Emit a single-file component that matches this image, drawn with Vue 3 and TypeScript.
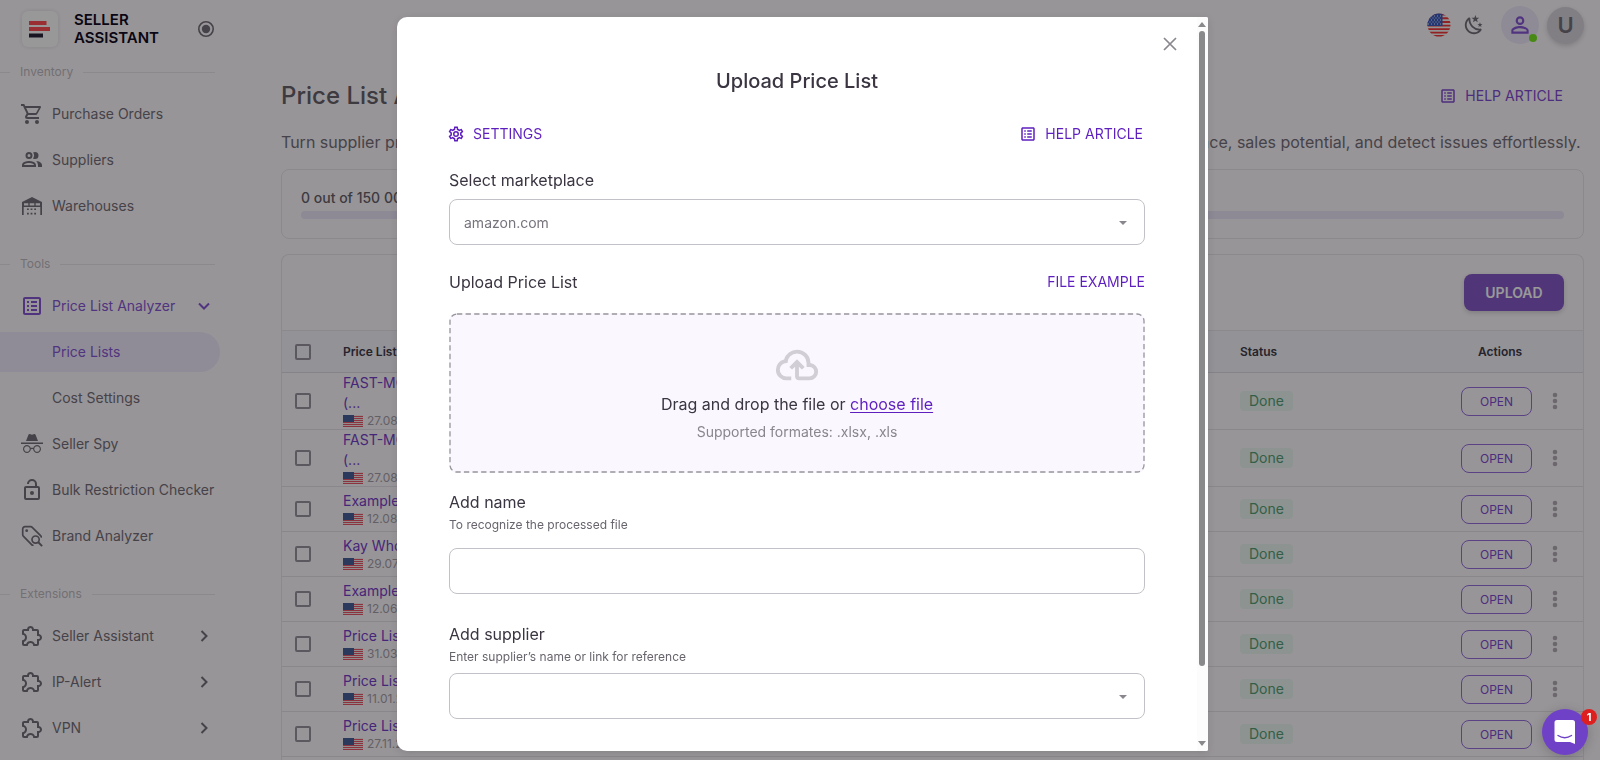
<script setup lang="ts">
import { ref } from 'vue'

interface NavItem {
  label: string
  icon?: string
  tone?: 'primary' | 'active'
  caret?: 'down' | 'right'
}

interface NavSection {
  title: string
  items: NavItem[]
}

interface PriceList {
  id: number
  name: string
  suffix?: string
  date: string
}

const icons: Record<string, string> = {
  cart: 'M17 18a2 2 0 0 1 2 2a2 2 0 0 1-2 2a2 2 0 0 1-2-2c0-1.11.89-2 2-2M1 2h3.27l.94 2H20a1 1 0 0 1 1 1c0 .17-.05.34-.12.5l-3.58 6.47c-.34.61-1 1.03-1.75 1.03H8.1l-.9 1.63l-.03.12a.25.25 0 0 0 .25.25H19v2H7a2 2 0 0 1-2-2c0-.35.09-.68.24-.96l1.36-2.45L3 4H1V2m6 16a2 2 0 0 1 2 2a2 2 0 0 1-2 2a2 2 0 0 1-2-2c0-1.11.89-2 2-2m9-7l2.78-5H6.14l2.36 5H16z',
  people: 'M13.07 10.41a5 5 0 0 0 0-5.82A3.39 3.39 0 0 1 15 4a3.5 3.5 0 0 1 0 7a3.39 3.39 0 0 1-1.93-.59M5.5 7.5A3.5 3.5 0 1 1 9 11a3.5 3.5 0 0 1-3.5-3.5m2 0A1.5 1.5 0 1 0 9 6a1.5 1.5 0 0 0-1.5 1.5M16 17v2H2v-2s0-4 7-4s7 4 7 4m-2 0c-.14-.78-1.33-2-5-2s-4.93 1.31-5 2m11.95-4A5.32 5.32 0 0 1 18 17v2h4v-2s0-3.63-6.06-4Z',
  warehouse: 'M2 21V8l10-5l10 5v13h-1.700V13H3.700v8zM4 9.200v2.300h4.300V9.200zm5.700 0v2.300h4.600V9.200zm6 0v2.300H20V9.200zM7 14.500h1.800v1.600H7zm3.600 0h1.800v1.600h-1.800zm3.600 0H16v1.600h-1.800zM7 18.800h1.800v1.600H7zm3.600 0h1.800v1.600h-1.800zm3.600 0H16v1.600h-1.800z',
  list: 'M11 15h6v2h-6v-2M9 7H7v2h2V7m2 6h6v-2h-6v2m0-4h6V7h-6v2m-2 2H7v2h2v-2m12-6v14c0 1.1-.9 2-2 2H5c-1.1 0-2-.9-2-2V5c0-1.1.9-2 2-2h14c1.1 0 2 .9 2 2m-2 0H5v14h14V5M9 15H7v2h2v-2z',
  spy: 'M17.06 13C15.2 13 13.64 14.33 13.24 16.1C12.29 15.69 11.42 15.8 10.76 16.09C10.35 14.31 8.79 13 6.94 13C4.77 13 3 14.79 3 17C3 19.21 4.77 21 6.94 21C9 21 10.68 19.38 10.84 17.32C11.18 17.08 12.07 16.63 13.16 17.34C13.34 19.39 15 21 17.06 21C19.23 21 21 19.21 21 17C21 14.79 19.23 13 17.06 13M6.94 19.86C5.38 19.86 4.13 18.58 4.13 17S5.39 14.14 6.94 14.14C8.5 14.14 9.75 15.42 9.75 17S8.5 19.86 6.94 19.86M17.06 19.86C15.5 19.86 14.25 18.58 14.25 17S15.5 14.14 17.06 14.14C18.62 14.14 19.88 15.42 19.88 17S18.61 19.86 17.06 19.86M23 10.5H1V12H23V10.5M15.53 2.63C15.31 2.14 14.75 1.88 14.22 2.05L12 2.79L9.77 2.05L9.72 2.04C9.19 1.89 8.63 2.17 8.43 2.68L6 9H18L15.56 2.68L15.53 2.63Z',
  lock: 'M18 20V10H6v10h12m0-12a2 2 0 0 1 2 2v10a2 2 0 0 1-2 2H6a2 2 0 0 1-2-2V10c0-1.11.89-2 2-2h9V6a3 3 0 0 0-3-3 3 3 0 0 0-3 3H7a5 5 0 0 1 5-5 5 5 0 0 1 5 5v2h1m-6 9a2 2 0 0 1-2-2c0-1.11.89-2 2-2a2 2 0 0 1 2 2 2 2 0 0 1-2 2z',
  puzzle: 'M22 13.5c0 1.76-1.3 3.22-3 3.46V20a2 2 0 0 1-2 2h-3.8v-.3a2.7 2.7 0 0 0-2.7-2.7c-1.5 0-2.7 1.21-2.7 2.7v.3H4a2 2 0 0 1-2-2v-3.8h.3C3.79 16.2 5 15 5 13.5a2.7 2.7 0 0 0-2.7-2.7H2V7a2 2 0 0 1 2-2h3.04C7.28 3.3 8.74 2 10.5 2s3.22 1.3 3.46 3H17a2 2 0 0 1 2 2v3.04c1.7.24 3 1.7 3 3.46M17 15h1.5a1.5 1.5 0 0 0 1.5-1.5 1.5 1.5 0 0 0-1.5-1.5H17V7h-5V5.5A1.5 1.5 0 0 0 10.5 4 1.5 1.5 0 0 0 9 5.5V7H4v2.12c1.76.68 3 2.38 3 4.38s-1.25 3.7-3 4.38V20h2.12a4.7 4.7 0 0 1 4.38-3c2 0 3.7 1.25 4.38 3H17v-5z',
  moon: 'm17.75 4.09l-2.53 1.94l.91 3.06l-2.63-1.81l-2.63 1.81l.91-3.06l-2.53-1.94L12.44 4l1.06-3l1.06 3l3.19.09m3.5 6.91l-1.64 1.25l.59 1.98l-1.7-1.17l-1.7 1.17l.59-1.98L15.75 11l2.06-.05L18.5 9l.69 1.95l2.06.05m-2.28 4.95c.83-.08 1.72 1.1 1.19 1.85c-.32.45-.66.87-1.08 1.27C15.17 23 8.84 23 4.94 19.07c-3.91-3.9-3.91-10.24 0-14.14c.4-.4.82-.76 1.27-1.08c.75-.53 1.93.36 1.85 1.19c-.27 2.86.69 5.83 2.89 8.02a9.96 9.96 0 0 0 8.02 2.89m-1.64 2.02a12.08 12.08 0 0 1-7.8-3.47c-2.17-2.19-3.33-5-3.49-7.82c-2.81 3.14-2.7 7.96.31 10.98c3.02 3.01 7.84 3.12 10.98.31Z',
  user: 'M12 4a4 4 0 0 1 4 4 4 4 0 0 1-4 4 4 4 0 0 1-4-4 4 4 0 0 1 4-4m0 2a2 2 0 0 0-2 2 2 2 0 0 0 2 2 2 2 0 0 0 2-2 2 2 0 0 0-2-2m0 7c2.67 0 8 1.33 8 4v3H4v-3c0-2.67 5.33-4 8-4m0 1.9c-2.97 0-6.1 1.46-6.1 2.1v1.1h12.2V17c0-.64-3.13-2.1-6.1-2.1z',
  cog: 'M12 8a4 4 0 0 1 4 4 4 4 0 0 1-4 4 4 4 0 0 1-4-4 4 4 0 0 1 4-4m0 2a2 2 0 0 0-2 2 2 2 0 0 0 2 2 2 2 0 0 0 2-2 2 2 0 0 0-2-2m-2 12c-.25 0-.46-.18-.5-.42l-.37-2.65c-.63-.25-1.17-.59-1.69-.99l-2.49 1.01c-.22.08-.49 0-.61-.22l-2-3.46a.493.493 0 0 1 .12-.64l2.11-1.66L4.5 12l.07-1-2.11-1.63a.493.493 0 0 1-.12-.64l2-3.46c.12-.22.39-.31.61-.22l2.49 1c.52-.39 1.06-.73 1.69-.98l.37-2.65c.04-.24.25-.42.5-.42h4c.25 0 .46.18.5.42l.37 2.65c.63.25 1.17.59 1.69.98l2.49-1c.22-.09.49 0 .61.22l2 3.46c.13.22.07.49-.12.64L19.43 11l.07 1-.07 1 2.11 1.63c.19.15.25.42.12.64l-2 3.46c-.12.22-.39.31-.61.22l-2.49-1c-.52.39-1.06.73-1.69.98l-.37 2.65c-.04.24-.25.42-.5.42h-4m1.25-18-.37 2.61c-1.2.25-2.26.89-3.03 1.78L5.44 7.35l-.75 1.3L6.8 10.2a5.55 5.55 0 0 0 0 3.6l-2.12 1.56.75 1.3 2.43-1.04c.77.88 1.82 1.52 3.01 1.76l.37 2.62h1.52l.37-2.61c1.19-.25 2.24-.89 3.01-1.77l2.43 1.04.75-1.3-2.12-1.55c.4-1.17.4-2.44 0-3.61l2.11-1.55-.75-1.3-2.41 1.04a5.42 5.42 0 0 0-3.03-1.77L12.75 4h-1.5z',
  cloud: 'M6.5 20q-2.275 0-3.887-1.575T1 14.575q0-1.95 1.175-3.475T5.25 9.15q.625-2.3 2.5-3.725T12 4q2.925 0 4.963 2.038T19 11q1.725.2 2.863 1.488T23 15.5q0 1.875-1.312 3.188T18.5 20H13q-.825 0-1.412-.587T11 18v-5.15L9.4 14.4L8 13l4-4l4 4l-1.4 1.4l-1.6-1.55V18h5.5q1.05 0 1.775-.725T21 15.5t-.725-1.775T18.5 13H17v-2q0-2.075-1.463-3.538T12 6T8.463 7.463T7 11h-.5q-1.45 0-2.475 1.025T3 14.5t1.025 2.475T6.5 18H9v2z',
}

const sections: NavSection[] = [
  {
    title: 'Inventory',
    items: [
      { label: 'Purchase Orders', icon: 'cart' },
      { label: 'Suppliers', icon: 'people' },
      { label: 'Warehouses', icon: 'warehouse' },
    ],
  },
  {
    title: 'Tools',
    items: [
      { label: 'Price List Analyzer', icon: 'list', tone: 'primary', caret: 'down' },
      { label: 'Price Lists', tone: 'active' },
      { label: 'Cost Settings' },
      { label: 'Seller Spy', icon: 'spy' },
      { label: 'Bulk Restriction Checker', icon: 'lock' },
      { label: 'Brand Analyzer', icon: 'tag' },
    ],
  },
  {
    title: 'Extensions',
    items: [
      { label: 'Seller Assistant', icon: 'puzzle', caret: 'right' },
      { label: 'IP-Alert', icon: 'puzzle', caret: 'right' },
      { label: 'VPN', icon: 'puzzle', caret: 'right' },
    ],
  },
]

const priceLists: PriceList[] = [
  { id: 1, name: 'FAST-MOVING', suffix: '(...', date: '27.08.2025' },
  { id: 2, name: 'FAST-MOVING', suffix: '(...', date: '27.08.2025' },
  { id: 3, name: 'Example', date: '12.08.2025' },
  { id: 4, name: 'Kay Wholesale', date: '29.07.2025' },
  { id: 5, name: 'Example', date: '12.06.2025' },
  { id: 6, name: 'Price List', date: '31.03.2025' },
  { id: 7, name: 'Price List', date: '11.01.2025' },
  { id: 8, name: 'Price List', date: '27.11.2024' },
]

const selected = ref<number[]>([])
const marketplace = ref('amazon.com')
const listName = ref('')
const supplier = ref('')
</script>

<template>
  <div class="shell">
    <aside class="sidebar">
      <div class="brand">
        <span class="brand-mark">
          <svg width="22" height="18" viewBox="0 0 22 18" aria-hidden="true">
            <path d="M0 1h17.500v4H0zM0 7h21v4H0z" fill="#ff4f55" />
            <path d="M0 13.500h14v4H0z" fill="#2a2238" />
          </svg>
        </span>
        <strong class="brand-name">SELLER<br />ASSISTANT</strong>
        <button class="icon-button" type="button" aria-label="Pin menu">
          <svg width="18" height="18" viewBox="0 0 18 18" aria-hidden="true">
            <circle cx="9" cy="9" r="7.200" fill="none" stroke="currentColor" stroke-width="1.600" />
            <circle cx="9" cy="9" r="4.200" fill="currentColor" />
          </svg>
        </button>
      </div>
      <nav>
        <section v-for="section in sections" :key="section.title" class="nav-section">
          <h2 class="nav-title"><span>{{ section.title }}</span></h2>
          <ul class="nav-list">
            <li v-for="item in section.items" :key="item.label">
              <a href="#" class="nav-link" :class="item.tone">
                <span class="nav-icon">
                  <svg v-if="item.icon === 'tag'" width="24" height="24" viewBox="0 0 24 24" fill="none" stroke="currentColor" stroke-width="1.700" aria-hidden="true">
                    <path d="M13.500 21.200a2 2 0 0 1-1.900-.600L3.300 12.200a2 2 0 0 1-.600-1.400V5a2.300 2.300 0 0 1 2.300-2.300h5.800a2 2 0 0 1 1.400.600l8.400 8.300q.900.900.500 2" />
                    <circle cx="6.700" cy="6.700" r="1.400" fill="currentColor" stroke="none" />
                    <circle cx="15.600" cy="15.600" r="3.600" />
                    <path d="m18.300 18.300 3.800 3.800" stroke-width="2" />
                  </svg>
                  <svg v-else-if="item.icon" width="24" height="24" viewBox="0 0 24 24" fill="currentColor" fill-rule="evenodd" aria-hidden="true">
                    <path :d="icons[item.icon]" />
                  </svg>
                </span>
                <span class="nav-label">{{ item.label }}</span>
                <svg v-if="item.caret" class="nav-caret" width="16" height="16" viewBox="0 0 16 16" fill="none" stroke="currentColor" stroke-width="2" aria-hidden="true">
                  <path :d="item.caret === 'down' ? 'M3 5.500l5 5 5-5' : 'M5.500 3l5 5-5 5'" />
                </svg>
              </a>
            </li>
          </ul>
        </section>
      </nav>
    </aside>

    <main class="main">
      <header class="topbar">
        <button class="icon-button" type="button" aria-label="Language">
          <svg width="24" height="24" viewBox="0 0 24 24" aria-hidden="true">
            <defs><clipPath id="round-flag"><circle cx="12" cy="12" r="11.500" /></clipPath></defs>
            <g clip-path="url(#round-flag)">
              <path fill="#f5f5f5" d="M0 0h24v24H0z" />
              <path fill="#f5383d" d="M0 .500h24v2H0zM0 4.300h24v1.900H0zM0 8h24v1.900H0zM0 11.700h24v1.900H0zM0 15.200h24v1.900H0zM0 18.700h24v1.800H0zM0 22h24v2H0z" />
              <path fill="#3e5cc0" d="M0 0h15.500v13H0z" />
              <path stroke="#e8eaf5" stroke-width="1" stroke-dasharray="1 2" d="M1 3h14M2.500 5h12M1 7h14M2.500 9h12M1 11h14" />
            </g>
          </svg>
        </button>
        <button class="icon-button" type="button" aria-label="Dark mode">
          <svg width="22" height="22" viewBox="0 0 24 24" fill="currentColor" aria-hidden="true"><path :d="icons.moon" /></svg>
        </button>
        <button class="round account" type="button" aria-label="Account">
          <svg width="26" height="26" viewBox="0 0 24 24" fill="currentColor" aria-hidden="true"><path :d="icons.user" /></svg>
          <span class="online"></span>
        </button>
        <button class="round avatar" type="button" aria-label="Profile">U</button>
      </header>

      <div class="heading">
        <h1>Price List Analyzer</h1>
        <a href="#" class="text-link">
          <svg width="18" height="18" viewBox="0 0 24 24" fill="currentColor" aria-hidden="true"><path :d="icons.list" /></svg>
          HELP ARTICLE
        </a>
      </div>
      <p class="intro">Turn supplier price lists into profitable deals. Upload your file to match products, estimate fees and profit, check performance, sales potential, and detect issues effortlessly.</p>

      <section class="card usage">
        <p>0 out of 150 000 rows used</p>
        <div class="meter"></div>
      </section>

      <section class="card lists">
        <div class="toolbar">
          <button class="primary-button" type="button">UPLOAD</button>
        </div>
        <table class="table">
          <colgroup>
            <col class="col-check" />
            <col class="col-name" />
            <col />
            <col class="col-status" />
            <col class="col-actions" />
          </colgroup>
          <thead>
            <tr>
              <th><input type="checkbox" class="check" aria-label="Select all" /></th>
              <th>Price List</th>
              <th>Supplier</th>
              <th>Status</th>
              <th class="actions-head">Actions</th>
            </tr>
          </thead>
          <tbody>
            <tr v-for="list in priceLists" :key="list.id">
              <td><input v-model="selected" type="checkbox" class="check" :value="list.id" :aria-label="`Select ${list.name}`" /></td>
              <td>
                <a href="#" class="list-name">{{ list.name }}<template v-if="list.suffix"><br />{{ list.suffix }}</template></a>
                <div class="list-meta">
                  <svg width="20" height="12" viewBox="0 0 20 12" aria-hidden="true">
                    <path fill="#f6e6e8" d="M0 0h20v12H0z" />
                    <path fill="#e8586a" d="M0 1h20v1H0zM0 3h20v1H0zM0 5h20v1H0zM0 7h20v1H0zM0 9h20v1H0zM0 11h20v1H0z" />
                    <path fill="#48609c" d="M0 0h11v7H0z" />
                  </svg>
                  <span>{{ list.date }}</span>
                  <svg width="14" height="14" viewBox="0 0 14 14" aria-hidden="true"><circle cx="7" cy="7" r="6" fill="none" stroke="#855ac8" stroke-width="2" /></svg>
                </div>
              </td>
              <td></td>
              <td><span class="badge">Done</span></td>
              <td>
                <div class="actions">
                  <button class="open-button" type="button">OPEN</button>
                  <button class="more" type="button" aria-label="More actions">
                    <svg width="6" height="18" viewBox="0 0 6 18" fill="currentColor" aria-hidden="true">
                      <circle cx="3" cy="3" r="2.300" /><circle cx="3" cy="9" r="2.300" /><circle cx="3" cy="15" r="2.300" />
                    </svg>
                  </button>
                </div>
              </td>
            </tr>
          </tbody>
        </table>
      </section>
    </main>
  </div>

  <div class="backdrop">
    <div class="modal" role="dialog" aria-modal="true" aria-labelledby="modal-title">
      <form class="modal-body" @submit.prevent>
        <button class="close" type="button" aria-label="Close">
          <svg width="14" height="14" viewBox="0 0 14 14" fill="none" stroke="currentColor" stroke-width="1.700" aria-hidden="true"><path d="M1 1l12 12M13 1L1 13" /></svg>
        </button>
        <h2 id="modal-title" class="modal-title">Upload Price List</h2>
        <div class="modal-links">
          <button type="button" class="text-link">
            <svg width="18" height="18" viewBox="0 0 24 24" fill="currentColor" aria-hidden="true"><path :d="icons.cog" /></svg>
            SETTINGS
          </button>
          <a href="#" class="text-link">
            <svg width="18" height="18" viewBox="0 0 24 24" fill="currentColor" aria-hidden="true"><path :d="icons.list" /></svg>
            HELP ARTICLE
          </a>
        </div>

        <label class="label" for="marketplace">Select marketplace</label>
        <div class="select-wrap marketplace-field">
          <select id="marketplace" v-model="marketplace" class="field">
            <option>amazon.com</option>
          </select>
          <svg class="arrow" width="8" height="4" viewBox="0 0 8 4" aria-hidden="true"><path d="M0 0h8L4 4z" fill="currentColor" /></svg>
        </div>

        <div class="upload-head">
          <span class="label">Upload Price List</span>
          <a href="#" class="text-link">FILE EXAMPLE</a>
        </div>
        <div class="dropzone">
          <svg class="dashes" width="100%" height="100%" aria-hidden="true">
            <rect x="1" y="1" rx="7" />
          </svg>
          <svg width="46" height="46" viewBox="0 0 24 24" fill="#d1ced6" aria-hidden="true"><path :d="icons.cloud" /></svg>
          <p class="drop-text">Drag and drop the file or <label class="choose" for="file">choose file</label></p>
          <input id="file" class="file" type="file" accept=".xlsx,.xls" />
          <p class="drop-hint">Supported formates: .xlsx, .xls</p>
        </div>

        <label class="label name-label" for="list-name">Add name</label>
        <p class="hint">To recognize the processed file</p>
        <input id="list-name" v-model="listName" class="field name-field" type="text" />

        <label class="label supplier-label" for="supplier">Add supplier</label>
        <p class="hint">Enter supplier’s name or link for reference</p>
        <div class="select-wrap supplier-field">
          <select id="supplier" v-model="supplier" class="field">
            <option value=""></option>
          </select>
          <svg class="arrow" width="8" height="4" viewBox="0 0 8 4" aria-hidden="true"><path d="M0 0h8L4 4z" fill="currentColor" /></svg>
        </div>
      </form>
      <div class="scrollbar" aria-hidden="true">
        <svg width="8" height="5" viewBox="0 0 8 5"><path d="M0 5h8L4 0z" fill="currentColor" /></svg>
        <div class="track"><div class="thumb"></div></div>
        <svg width="8" height="5" viewBox="0 0 8 5"><path d="M0 0h8L4 5z" fill="currentColor" /></svg>
      </div>
    </div>
  </div>

  <button class="chat" type="button" aria-label="Open chat, 1 unread message">
    <svg width="22" height="24" viewBox="0 0 22 24" aria-hidden="true">
      <path fill="#fff" d="M3 0h15.500a2.500 2.500 0 0 1 2.500 2.500V24l-5-2H3a2.500 2.500 0 0 1-2.500-2.500v-17A2.500 2.500 0 0 1 3 0z" />
      <path fill="none" stroke="#6f41c6" stroke-width="1.400" stroke-linecap="round" d="M4 15.500q6.800 4.500 13.500 0" />
    </svg>
    <span class="chat-count">1</span>
  </button>
</template>

<style scoped>
.shell,
.backdrop,
.chat {
  font-family: Inter, "Liberation Sans", sans-serif;
  box-sizing: border-box;
}

.shell *,
.backdrop * {
  box-sizing: border-box;
}

.shell {
  display: flex;
  height: 100vh;
  overflow: hidden;
  background: #fdf9fd;
  color: #756f7a;
  font-size: 14px;
  line-height: 20px;
}

button,
input,
select {
  font-family: inherit;
}

button {
  border: 0;
  padding: 0;
  background: none;
  color: inherit;
  cursor: pointer;
}

a {
  color: inherit;
  text-decoration: none;
}

svg {
  display: block;
  flex: none;
}

h1,
h2,
p,
ul {
  margin: 0;
  padding: 0;
}

.icon-button {
  display: flex;
}

.sidebar {
  flex: none;
  width: 220px;
}

.brand {
  display: flex;
  align-items: center;
  height: 58px;
  padding: 0 5px 0 22px;
}

.brand-mark {
  display: flex;
  align-items: center;
  justify-content: center;
  width: 36px;
  height: 36px;
  border-radius: 6px;
  background: #fffdff;
  box-shadow: 0 0 4px rgba(58, 53, 65, 0.14);
}

.brand-name {
  flex: 1;
  margin-left: 16px;
  font-size: 15px;
  font-weight: 600;
  line-height: 18px;
  color: #120b24;
}

.nav-section {
  padding-top: 4px;
  margin-bottom: 18px;
}

.nav-title {
  display: flex;
  align-items: center;
  gap: 10px;
  height: 20px;
  margin-right: 5px;
  font-size: 12px;
  font-weight: 400;
  color: #bfb9c3;
}

.nav-title::before,
.nav-title::after {
  content: "";
  height: 1px;
  background: #e9e5ea;
}

.nav-title::before {
  width: 10px;
}

.nav-title::after {
  flex: 1;
}

.nav-list {
  display: flex;
  flex-direction: column;
  gap: 6px;
  padding: 12px 0 6px;
  list-style: none;
}

.nav-link {
  display: flex;
  align-items: center;
  gap: 8px;
  height: 40px;
  padding: 0 8px 0 20px;
  border-radius: 0 20px 20px 0;
  white-space: nowrap;
}

.nav-link.primary,
.nav-link.active {
  color: #8758d6;
}

.nav-link.active {
  background: #f1eafc;
}

.nav-icon {
  width: 24px;
  height: 24px;
}

.nav-label {
  flex: 1;
}

.main {
  display: flex;
  flex: 1;
  flex-direction: column;
  min-width: 0;
  padding: 0 16px 0 61px;
}

.topbar {
  display: flex;
  flex: none;
  align-items: center;
  justify-content: flex-end;
  height: 50px;
}

.topbar .icon-button + .icon-button {
  margin: 0 16px 0 12px;
}

.round {
  position: relative;
  display: flex;
  align-items: center;
  justify-content: center;
  width: 38px;
  height: 38px;
  border-radius: 50%;
}

.account {
  background: #efe8fa;
  color: #8758d6;
}

.online {
  position: absolute;
  right: 2px;
  bottom: 2px;
  width: 8px;
  height: 8px;
  border-radius: 50%;
  background: #78e525;
}

.avatar {
  width: 37px;
  height: 37px;
  margin-left: 8px;
  background: #d8d4dc;
  box-shadow: 0 2px 5px rgba(58, 53, 65, 0.2);
  font-size: 22px;
  font-weight: 600;
}

.heading {
  display: flex;
  flex: none;
  align-items: center;
  justify-content: space-between;
  height: 32px;
  margin-top: 30px;
  padding-right: 21px;
}

.heading h1 {
  font-size: 24px;
  font-weight: 500;
  line-height: 32px;
  color: #67616c;
}

.text-link {
  display: flex;
  align-items: center;
  gap: 8px;
  font-size: 14px;
  line-height: 24px;
  color: #5e1fbf;
}

.shell .text-link {
  color: #804cd2;
}

.intro {
  margin: 18px 0 15px;
  font-size: 16px;
  line-height: 24px;
  white-space: nowrap;
}

.card {
  border: 1px solid #e9e4eb;
  border-radius: 8px;
}

.usage {
  margin-bottom: 15px;
  padding: 18px 19px 19px;
  font-weight: 500;
  color: #67616c;
}

.meter {
  height: 8px;
  margin-top: 3px;
  border-radius: 4px;
  background: #ebe4f8;
}

.lists {
  flex: 1;
  border-bottom: 0;
  border-radius: 8px 8px 0 0;
}

.toolbar {
  display: flex;
  justify-content: flex-end;
  padding: 19px;
}

.primary-button {
  width: 100px;
  height: 37px;
  border-radius: 8px;
  background: #855ac8;
  box-shadow: 0 2px 5px rgba(58, 53, 65, 0.2);
  color: #fff;
  font-size: 14px;
  font-weight: 600;
}

.table {
  width: 100%;
  table-layout: fixed;
  border-collapse: separate;
  border-spacing: 0;
}

.col-check {
  width: 61px;
}

.col-name {
  width: 220px;
}

.col-status {
  width: 214px;
}

.col-actions {
  width: 129px;
}

th {
  height: 43px;
  padding: 0;
  border-top: 1px solid #e9e4eb;
  border-bottom: 1px solid #dfdae3;
  background: #f5f3fb;
  font-size: 12px;
  font-weight: 600;
  text-align: left;
  color: #413b4a;
}

.actions-head {
  padding-left: 24px;
}

td {
  height: 45px;
  padding: 0;
  border-bottom: 1px solid #e7e2e9;
}

.check {
  display: block;
  width: 16px;
  height: 16px;
  margin: 0 0 0 13px;
  border: 2px solid #99939f;
  border-radius: 2px;
  appearance: none;
}

.list-name {
  display: block;
  line-height: 20px;
  color: #7640c8;
}

.list-meta {
  display: flex;
  align-items: center;
  gap: 4px;
  height: 16px;
  font-size: 12px;
  line-height: 16px;
  color: #a69fab;
}

.badge {
  display: inline-block;
  padding: 0 9px;
  border-radius: 4px;
  background: #ebf6f0;
  color: #559f78;
}

.actions {
  display: flex;
  align-items: center;
  padding-left: 7px;
}

.open-button {
  width: 71px;
  height: 29px;
  border: 1px solid #966edc;
  border-radius: 8px;
  font-size: 12px;
  color: #804cd2;
}

.more {
  display: flex;
  justify-content: center;
  width: 24px;
  margin-left: 11px;
  color: #b2acb6;
}

.backdrop {
  position: fixed;
  inset: 0;
  display: flex;
  justify-content: center;
  padding: 17px 0 9px 5px;
  background: rgba(0, 0, 0, 0.4);
}

.modal {
  position: relative;
  display: flex;
  width: 100%;
  max-width: 811px;
  border-radius: 10px 2px 2px 10px;
  background: #fff;
  box-shadow: 0 2px 8px rgba(58, 53, 65, 0.2);
  color: #3a3541;
  overflow: hidden;
}

.modal-body {
  flex: 1;
  min-width: 0;
  padding: 50px 52px 32px;
}

.close {
  position: absolute;
  top: 20px;
  right: 31px;
  color: #89868d;
}

.modal-title {
  font-size: 20px;
  font-weight: 500;
  line-height: 28px;
  text-align: center;
}

.modal-links {
  display: flex;
  justify-content: space-between;
  margin: 27px 2px 22px -2px;
}

.label {
  display: block;
  font-size: 16px;
  line-height: 24px;
}

.select-wrap {
  position: relative;
}

.marketplace-field {
  margin-top: 7px;
}

.field {
  display: block;
  width: 100%;
  height: 46px;
  padding: 0 14px;
  border: 1px solid #c3c1c7;
  border-radius: 8px;
  background: #fff;
  appearance: none;
  font-size: 14px;
  color: #77737c;
}

.arrow {
  position: absolute;
  top: 22px;
  right: 18px;
  color: #89868d;
}

.upload-head {
  display: flex;
  align-items: center;
  justify-content: space-between;
  margin: 25px 0 19px;
}

.dropzone {
  position: relative;
  display: flex;
  flex-direction: column;
  align-items: center;
  height: 160px;
  padding-top: 29px;
  border-radius: 8px;
  background: #faf7ff;
}

.dashes {
  position: absolute;
  inset: 0;
}

.dashes rect {
  width: calc(100% - 2px);
  height: calc(100% - 2px);
  fill: none;
  stroke: #98969b;
  stroke-width: 1.3;
  stroke-dasharray: 5.3 3.3;
}

.drop-text {
  margin: 4px 0 6px;
  font-size: 16px;
  line-height: 24px;
}

.choose {
  position: relative;
  color: #5e1fbf;
  text-decoration: underline;
  text-decoration-thickness: 1px;
  text-underline-offset: 2px;
  cursor: pointer;
}

.file {
  position: absolute;
  width: 1px;
  height: 1px;
  opacity: 0;
}

.drop-hint {
  font-size: 14px;
  line-height: 20px;
  color: #89868d;
}

.name-label {
  margin-top: 17px;
}

.hint {
  margin-top: 3px;
  font-size: 12px;
  line-height: 16px;
  color: #68646d;
}

.name-field {
  margin-top: 15px;
}

.supplier-label {
  margin-top: 28px;
}

.supplier-field {
  margin-top: 8px;
}

.scrollbar {
  display: flex;
  flex-direction: column;
  align-items: center;
  width: 11px;
  padding: 5px 2px 5px 0;
  background: #fcfcfc;
  color: #89898b;
}

.track {
  flex: 1;
  padding: 4px 0;
}

.thumb {
  width: 6px;
  height: 90%;
  border-radius: 3px;
  background: #89898b;
}

.chat {
  position: fixed;
  right: 12px;
  bottom: 5px;
  display: flex;
  align-items: center;
  justify-content: center;
  width: 46px;
  height: 46px;
  border-radius: 50%;
  background: #6f41c6;
  box-shadow: 0 2px 12px rgba(0, 0, 0, 0.2);
}

.chat-count {
  position: absolute;
  top: 0;
  right: -9px;
  width: 16px;
  height: 16px;
  border-radius: 50%;
  background: #dd1f1f;
  color: #fff;
  font-size: 11px;
  font-weight: 700;
  line-height: 16px;
}
</style>

<style>
body {
  margin: 0;
  overflow: hidden;
}
</style>
